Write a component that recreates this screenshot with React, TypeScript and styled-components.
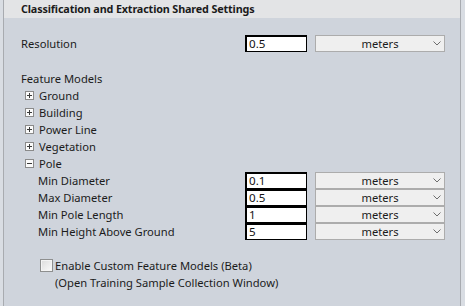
import React from 'react';
import styled, {createGlobalStyle} from 'styled-components';

const Global = createGlobalStyle`
    html, body {
        margin: 0;
        padding: 0;
        background: #d9dde3;
    }
    body {
        font-family: "Noto Sans", "Open Sans", "Liberation Sans", sans-serif;
        font-size: 11.2px;
        color: #1b1b1b;
    }
`

const Frame = styled.div`
    width: 458px;
    height: 306px;
    margin-left: 3px;
    border-left: 1px solid #a8abb0;
    border-right: 1px solid #a8abb0;
    background: #cfd4dc;
    box-sizing: border-box;
`

const Header = styled.div`
    height: 18px;
    line-height: 18px;
    padding-left: 17px;
    background: #e3e4e6;
    font-weight: 700;
    font-size: 10.8px;
    letter-spacing: -0.15px;
`

const Body = styled.div`
    padding-left: 17px;
    display: flex;
    flex-direction: column;
`

const Row = styled.div<{$indent?: number; $gap?: number}>`
    display: grid;
    grid-template-columns: ${p => 224 - (p.$indent || 0)}px 62px 8px 130px;
    align-items: center;
    height: 17px;
    padding-left: ${p => p.$indent || 0}px;
    margin-top: ${p => p.$gap || 0}px;
`

const Label = styled.span`
    line-height: 17px;
    white-space: nowrap;
`

const TextBox = styled.div`
    grid-column: 2;
    height: 17px;
    box-sizing: border-box;
    background: #fff;
    color: #111;
    border: 1px solid #000;
    border-top-width: 2px;
    border-left-width: 2px;
    padding-left: 2px;
    line-height: 14px;
    font-size: 11.6px;
`

const Select = styled.div`
    grid-column: 4;
    height: 17px;
    box-sizing: border-box;
    background: #efefef;
    border: 1px solid #acacac;
    position: relative;
    text-align: center;
    line-height: 15px;
    svg {
        position: absolute;
        right: 3px;
        top: 5px;
    }
`

const TreeRow = styled.div<{$gap?: number}>`
    display: flex;
    align-items: center;
    height: 17px;
    padding-left: 4px;
    gap: 5px;
    margin-top: ${p => p.$gap || 0}px;
`

const CheckRow = styled.div<{$gap?: number}>`
    display: flex;
    align-items: center;
    height: 17px;
    padding-left: 19px;
    gap: 2px;
    margin-top: ${p => p.$gap || 0}px;
`

const Check = styled.span`
    width: 13px;
    height: 13px;
    box-sizing: border-box;
    border: 1px solid #8e8f8f;
    background: linear-gradient(135deg, #dcdcdc, #fbfbfb);
    box-shadow: inset 0 0 0 1px #f4f4f4;
`

const Note = styled.div`
    height: 17px;
    line-height: 17px;
    padding-left: 51px;
`

const Expander: React.FC<{open?: boolean}> = ({open}) => (
    <svg width="9" height="9" viewBox="0 0 9 9">
        <rect x="0.5" y="0.5" width="8" height="8" fill="#fbfbfb" stroke="#8a8a8a"/>
        <line x1="2" y1="4.5" x2="7" y2="4.5" stroke="#3a3a3a"/>
        {!open && <line x1="4.5" y1="2" x2="4.5" y2="7" stroke="#3a3a3a"/>}
    </svg>
)

const Chevron = () => (
    <svg width="8" height="5" viewBox="0 0 8 5">
        <polyline points="0.5,0.5 4,4 7.5,0.5" fill="none" stroke="#6d6d6d" strokeWidth="1"/>
    </svg>
)

const Field: React.FC<{label: string; value: string; indent?: number; gap?: number}> = ({label, value, indent, gap}) => (
    <Row $indent={indent} $gap={gap}>
        <Label>{label}</Label>
        <TextBox>{value}</TextBox>
        <Select>meters<Chevron/></Select>
    </Row>
)

const models = ['Ground', 'Building', 'Power Line', 'Vegetation'];

const poleFields = [
    {label: 'Min Diameter', value: '0.1'},
    {label: 'Max Diameter', value: '0.5'},
    {label: 'Min Pole Length', value: '1'},
    {label: 'Min Height Above Ground', value: '5'},
];

const App: React.FC = () => {
    return (
        <Frame>
            <Global/>
            <Header>Classification and Extraction Shared Settings</Header>
            <Body>
                <Field label="Resolution" value="0.5" gap={17}/>
                <Row $gap={18}><Label>Feature Models</Label></Row>
                {models.map(m => (
                    <TreeRow key={m}><Expander/><Label>{m}</Label></TreeRow>
                ))}
                <TreeRow><Expander open/><Label>Pole</Label></TreeRow>
                {poleFields.map(f => (
                    <Field key={f.label} label={f.label} value={f.value} indent={17}/>
                ))}
                <CheckRow $gap={17}><Check/><Label>Enable Custom Feature Models (Beta)</Label></CheckRow>
            </Body>
            <Note>(Open Training Sample Collection Window)</Note>
        </Frame>
    )
}

export default App
